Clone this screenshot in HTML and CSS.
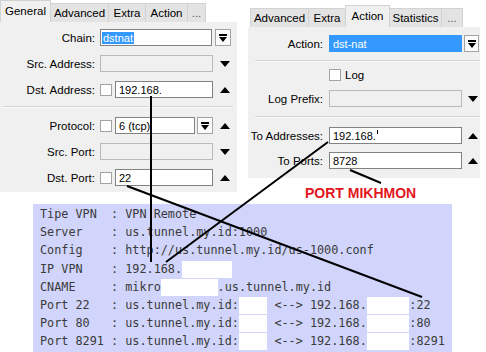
FILE: index.html
```html
<!DOCTYPE html>
<html>
<head>
<meta charset="utf-8">
<link rel="stylesheet" href="styles.css">
</head>
<body>
<div class="canvas">
  <div class="top">
    <div class="win win-left">
      <div class="tabs">
        <div class="tab sel t-general">General</div>
        <div class="tab t-adv">Advanced</div>
        <div class="tab t-extra">Extra</div>
        <div class="tab t-action">Action</div>
        <div class="tab t-more">...</div>
      </div>
      <div class="body">
        <div class="row">
          <div class="lbl">Chain:</div>
          <div class="inp w112"><span class="hl">dstnat</span></div>
          <div class="dd"><svg width="8" height="8" viewBox="0 0 8 8"><rect x="0" y="0" width="8" height="2"/><path d="M0 3H8L4 8Z"/></svg></div>
        </div>
        <div class="row mt9">
          <div class="lbl">Src. Address:</div>
          <div class="inp dis w113"></div>
          <div class="trail"><svg width="10" height="6" viewBox="0 0 10 6"><path d="M0 0H10L5 6Z"/></svg></div>
        </div>
        <div class="row mt9">
          <div class="lbl">Dst. Address:</div>
          <div class="chk"></div>
          <div class="inp w98">192.168.</div>
          <div class="trail"><svg width="10" height="6" viewBox="0 0 10 6"><path d="M0 6H10L5 0Z"/></svg></div>
        </div>
        <div class="sep sep-l"></div>
        <div class="row">
          <div class="lbl">Protocol:</div>
          <div class="chk"></div>
          <div class="inp w80">6 (tcp)</div>
          <div class="dd ml2"><svg width="8" height="8" viewBox="0 0 8 8"><rect x="0" y="0" width="8" height="2"/><path d="M0 3H8L4 8Z"/></svg></div>
          <div class="trail"><svg width="10" height="6" viewBox="0 0 10 6"><path d="M0 6H10L5 0Z"/></svg></div>
        </div>
        <div class="row mt9">
          <div class="lbl">Src. Port:</div>
          <div class="inp dis w113"></div>
          <div class="trail"><svg width="10" height="6" viewBox="0 0 10 6"><path d="M0 0H10L5 6Z"/></svg></div>
        </div>
        <div class="row mt9">
          <div class="lbl">Dst. Port:</div>
          <div class="chk"></div>
          <div class="inp w98">22</div>
          <div class="trail"><svg width="10" height="6" viewBox="0 0 10 6"><path d="M0 6H10L5 0Z"/></svg></div>
        </div>
      </div>
    </div>

    <div class="rcol">
      <div class="win win-right">
        <div class="tabs">
          <div class="tab t-adv">Advanced</div>
          <div class="tab t-extra">Extra</div>
          <div class="tab sel t-action2">Action</div>
          <div class="tab t-stats">Statistics</div>
          <div class="tab t-more2">...</div>
        </div>
        <div class="body">
          <div class="row">
            <div class="lbl">Action:</div>
            <div class="inp sel w133">dst-nat</div>
            <div class="dd dd-r"><svg width="8" height="8" viewBox="0 0 8 8"><rect x="0" y="0" width="8" height="2"/><path d="M0 3H8L4 8Z"/></svg></div>
          </div>
          <div class="sep sep-r1"></div>
          <div class="row">
            <div class="lbl"></div>
            <div class="chk chk-log"></div>
            <div class="logtxt">Log</div>
          </div>
          <div class="row mt7">
            <div class="lbl">Log Prefix:</div>
            <div class="inp dis w133"></div>
            <div class="trail trail-r"><svg width="10" height="6" viewBox="0 0 10 6"><path d="M0 0H10L5 6Z"/></svg></div>
          </div>
          <div class="sep sep-r2"></div>
          <div class="row">
            <div class="lbl">To Addresses:</div>
            <div class="inp w133">192.168.<span class="tick"></span></div>
            <div class="trail trail-r"><svg width="10" height="6" viewBox="0 0 10 6"><path d="M0 6H10L5 0Z"/></svg></div>
          </div>
          <div class="row mt8">
            <div class="lbl">To Ports:</div>
            <div class="inp w133">8728</div>
            <div class="trail trail-r"><svg width="10" height="6" viewBox="0 0 10 6"><path d="M0 6H10L5 0Z"/></svg></div>
          </div>
        </div>
      </div>
      <div class="note">PORT MIKHMON</div>
    </div>
  </div>

  <div class="vpn">Tipe VPN  : VPN Remote
Server    : us.tunnel.my.id:1000
Config    : http://us.tunnel.my.id/us-1000.conf
IP VPN    : 192.168.<span class="rd">       </span>
CNAME     : mikro<span class="rd">        </span>.us.tunnel.my.id
Port 22   : us.tunnel.my.id:<span class="rd">    </span> &lt;--&gt; 192.168.<span class="rd">      </span>:22
Port 80   : us.tunnel.my.id:<span class="rd">    </span> &lt;--&gt; 192.168.<span class="rd">      </span>:80
Port 8291 : us.tunnel.my.id:<span class="rd">    </span> &lt;--&gt; 192.168.<span class="rd">      </span>:8291</div>

  <svg class="lines" width="486" height="352" viewBox="0 0 486 352">
    <g stroke="#000" stroke-width="2" fill="none">
      <line x1="151" y1="96" x2="151" y2="262"/>
      <line x1="127" y1="186" x2="422" y2="297"/>
      <line x1="328" y1="142" x2="166" y2="262"/>
      <line x1="350" y1="170" x2="381" y2="183"/>
    </g>
  </svg>
</div>
</body>
</html>
```

FILE: styles.css
```css
* { box-sizing: border-box; margin: 0; padding: 0; }
html, body { width: 486px; height: 352px; overflow: hidden; background: #fff; }
body { font-family: "Liberation Sans", Arial, sans-serif; font-size: 11.5px; color: #000; }

.canvas { position: relative; width: 486px; height: 352px; }
.top { display: flex; gap: 11px; align-items: flex-start; }

.win-left { width: 237px; }
.rcol { display: flex; flex-direction: column; }
.win-right { width: 232px; margin-top: 5px; }

.tabs { display: flex; height: 22px; align-items: flex-end; }
.win-right .tabs { padding-left: 2px; }
.tab {
  height: 19px; background: #e3e3e3; border: 1px solid #d2d2d2; border-bottom: none;
  display: flex; align-items: center; justify-content: center; margin-left: -1px;
  white-space: nowrap;
}
.tab:first-child { margin-left: 0; }
.tab.sel { height: 22px; background: #f0f0f0; border-color: #d2d2d2; padding-bottom: 2px; z-index: 1; }
.t-general { width: 51px; }
.t-adv { width: 59px; }
.t-extra { width: 38px; }
.t-action { width: 43px; }
.t-more { width: 19px; color: #555; }
.t-action2 { width: 45px; }
.t-stats { width: 53px; }
.t-more2 { width: 22px; color: #555; }

.body { background: #f0f0f0; }
.win-left .body { height: 170px; padding-top: 7px; }
.win-right .body { height: 151px; padding-top: 8px; }

.row { display: flex; align-items: center; height: 17px; }
.mt9 { margin-top: 9px; }
.mt7 { margin-top: 7px; }
.mt8 { margin-top: 8px; }
.lbl { width: 100px; padding-right: 5px; text-align: right; white-space: nowrap; flex: none; }
.win-right .lbl { width: 81px; padding-right: 6px; }

.inp {
  height: 17px; background: #fff; border: 1px solid #828282; padding: 0 3px;
  font-size: 11px; display: flex; align-items: center; white-space: nowrap; overflow: hidden; flex: none;
}
.inp.dis { background: #f0f0f0; border-color: #b9b9b9; }
.inp.sel { background: #3399ff; color: #fff; border-color: #3399ff; }
.hl { background: #3399ff; color: #fff; line-height: 12px; margin-left: -2px; padding: 0 1px; }
.tick { display: inline-block; width: 1px; height: 4px; background: #000; align-self: flex-start; margin-top: 2px; margin-left: 1px; }

.w112 { width: 112px; }
.w113 { width: 113px; }
.w98 { width: 98px; }
.w80 { width: 80px; }
.w133 { width: 133px; }

.chk { width: 12px; height: 12px; border: 1px solid #a3a3a3; background: #fff; margin-right: 3px; flex: none; }
.chk-log { margin-right: 4px; }
.logtxt { font-size: 11.5px; }

.dd {
  width: 16px; height: 17px; border: 1px solid #a3a3a3; background: #fbfbfb;
  display: flex; align-items: center; justify-content: center; margin-left: 3px; flex: none;
}
.dd.ml2 { margin-left: 2px; }
.dd.dd-r { width: 15px; margin-left: 2px; }

.trail { width: 24px; display: flex; justify-content: center; flex: none; }
.trail-r { width: 18px; padding-left: 3px; }

.sep { border-top: 1px solid #d7d7d7; border-bottom: 1px solid #fafafa; }
.sep-l { margin: 8px 4px 9px 3px; }
.sep-r1 { margin: 8px 0 4px 7px; }
.sep-r2 { margin: 9px 0 9px 7px; }

.note {
  font-family: "Liberation Sans", Arial, sans-serif; font-weight: bold; font-size: 14px;
  line-height: 16px; color: #e3161c; margin-top: 7px; padding-left: 57px;
}

.vpn {
  margin: 3px 0 0 33px; width: 419px; background: #d1d5fb;
  padding: 1px 0 4px 7px;
  font-family: "DejaVu Sans Mono", "Liberation Mono", monospace; font-size: 11.8px;
  line-height: 18.2px; color: #3a3a3a; white-space: pre;
}
.rd { display: inline-block; background: #fff; line-height: 17px; height: 17px; vertical-align: middle; }

.lines { position: absolute; left: 0; top: 0; pointer-events: none; }
```
